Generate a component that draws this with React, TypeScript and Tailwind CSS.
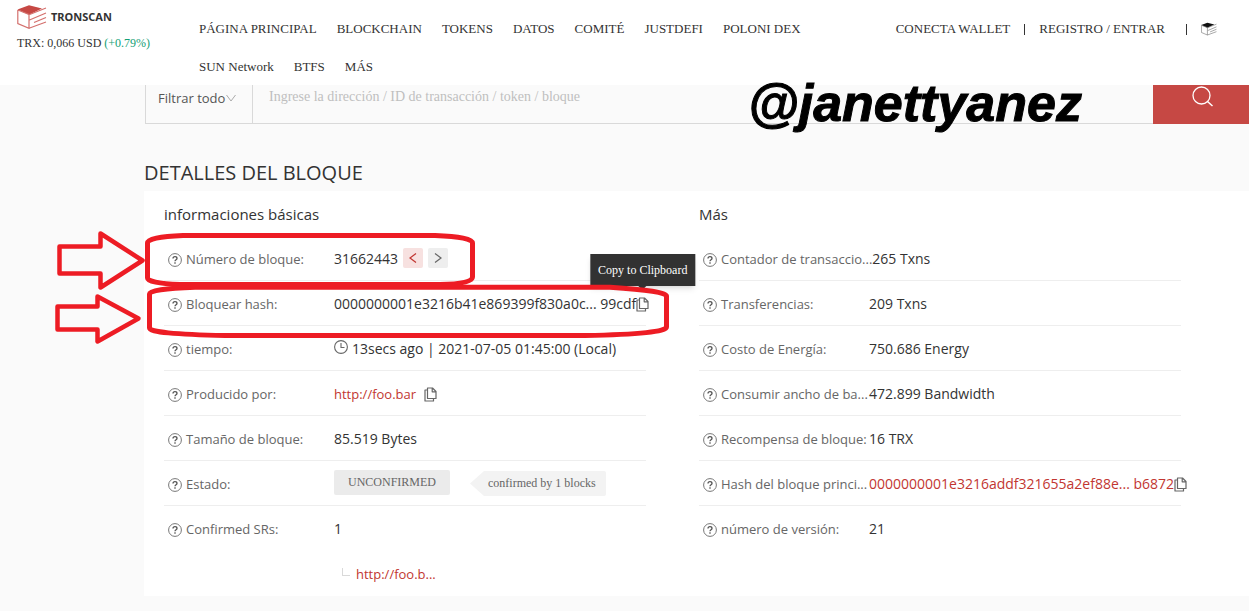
// src/pages/BlockDetails.tsx
// Block detail page: header, search bar, two columns of block fields and the
// hand-drawn callouts on top.

import type { ReactNode } from "react";

const NAV_ITEMS = [
  "PÁGINA PRINCIPAL",
  "BLOCKCHAIN",
  "TOKENS",
  "DATOS",
  "COMITÉ",
  "JUSTDEFI",
  "POLONI DEX",
  "SUN Network",
  "BTFS",
  "MÁS",
];

function CubeIcon({
  top,
  line,
  className,
}: {
  top: string;
  line: string;
  className: string;
}) {
  return (
    <svg viewBox="0 0 30 24" className={className} aria-hidden="true">
      <path d="M.5 4.500 12 .3 25 3.500 12 9.800Z" fill={top} />
      <path
        d="M.8 5v13.500L12 23.300V9.500L.8 5M12 23.300 29 17M12 9.800 29 3M12.500 15 29 8M17 17.500 29 12.500"
        fill="none"
        stroke={line}
        strokeWidth="1.200"
      />
    </svg>
  );
}

function HelpIcon() {
  return (
    <svg viewBox="0 0 14 14" className="mt-px size-3.5 shrink-0" aria-hidden="true">
      <circle cx="7" cy="7" r="6.400" fill="none" stroke="#777" />
      <path
        d="M5 5.600C5 4.300 5.900 3.700 7 3.700s2 .6 2 1.700C9 6.700 7 6.700 7 8.300"
        fill="none"
        stroke="#555"
        strokeWidth="1.300"
      />
      <rect x="6.300" y="9.300" width="1.400" height="1.400" fill="#555" />
    </svg>
  );
}

function CopyIcon() {
  return (
    <svg viewBox="0 0 13 15" className="h-[15px] w-[13px]" aria-hidden="true">
      <path
        d="M3.500 1h5l3.500 3.500V11.500H3.500ZM8.200 1v3.800H12M3.500 3H1v11h8.500v-2.500"
        fill="none"
        stroke="#666"
        strokeWidth="1.200"
        strokeLinejoin="round"
      />
    </svg>
  );
}

function ClockIcon() {
  return (
    <svg viewBox="0 0 14 14" className="mb-1 size-3.5 shrink-0" aria-hidden="true">
      <circle cx="7" cy="7" r="6.400" fill="none" stroke="#666" strokeWidth="1.100" />
      <path d="M7 3v4.500h3.500" fill="none" stroke="#666" strokeWidth="1.100" />
    </svg>
  );
}

function CopyButton({ tooltip }: { tooltip?: string }) {
  return (
    <span className="relative flex">
      <button type="button" aria-label="Copy to Clipboard">
        <CopyIcon />
      </button>
      {tooltip && (
        <span
          role="tooltip"
          className="absolute bottom-full left-1/2 mb-[11px] -translate-x-1/2 bg-[#323232] px-2 font-['Liberation_Serif',serif] text-xs leading-8 whitespace-nowrap text-white shadow-md"
        >
          {tooltip}
          <span className="absolute top-full left-1/2 -translate-x-1/2 border-x-4 border-t-4 border-x-transparent border-t-[#323232]" />
        </span>
      )}
    </span>
  );
}

function Field({
  label,
  children,
  last = false,
}: {
  label: string;
  children: ReactNode;
  last?: boolean;
}) {
  return (
    <div
      className={`flex h-[45px] items-center border-b pt-0.5 whitespace-nowrap ${
        last ? "border-transparent" : "border-[#eee]"
      }`}
    >
      <dt className="flex min-w-[170px] shrink-0 items-center gap-1 pl-1 text-[13px] text-[#666]">
        <HelpIcon />
        {label}
      </dt>
      <dd className="flex items-center gap-1">{children}</dd>
    </div>
  );
}

function Header() {
  return (
    <header className="flex bg-white pr-8 pl-[17px] font-['Liberation_Serif',serif] text-[13px] text-[#333]">
      <div className="w-[182px] shrink-0 pt-[5px]">
        <a href="#" className="flex h-6 items-center gap-1">
          <CubeIcon top="#c64844" line="#d4706d" className="h-6 w-[30px]" />
          <span className="font-['Noto_Sans',sans-serif] text-[11px] font-bold">
            TRONSCAN
          </span>
        </a>
        <p className="text-xs leading-7">
          TRX: 0,066 USD <span className="text-[#13a075]">(+0.79%)</span>
        </p>
      </div>
      <nav className="flex flex-1 flex-wrap gap-x-5 pt-[9px] pr-5 leading-10">
        {NAV_ITEMS.map((item) => (
          <a key={item} href="#" className="h-[38px]">
            {item}
          </a>
        ))}
      </nav>
      <div className="flex h-[38px] shrink-0 items-center pt-5">
        <a href="#">CONECTA WALLET</a>
        <span className="mx-3.5 h-[11px] w-px bg-[#333]" />
        <a href="#">REGISTRO / ENTRAR</a>
        <span className="mr-3.5 ml-[21px] h-[11px] w-px bg-[#333]" />
        <CubeIcon top="#111" line="#777" className="h-3.5 w-4" />
      </div>
    </header>
  );
}

function SearchBar() {
  return (
    <form className="ml-[145px] flex h-[39px] border-l border-[#d9d9d9] text-sm">
      <div className="flex w-[107px] items-start border-r border-b border-[#d9d9d9] pt-px pl-3">
        <select
          aria-label="Filtro"
          className="appearance-none bg-transparent text-[13px] leading-6 text-[#555]"
        >
          <option>Filtrar todo</option>
        </select>
        <svg viewBox="0 0 10 8" className="mt-2 h-2 w-2.5 shrink-0" aria-hidden="true">
          <path d="m.5 1 4.500 6 4.500-6" fill="none" stroke="#aaa" />
        </svg>
      </div>
      <div className="flex flex-1 items-start border-b border-[#d9d9d9] pl-4">
        <input
          type="text"
          aria-label="Buscar"
          placeholder="Ingrese la dirección / ID de transacción / token / bloque"
          className="w-full bg-transparent font-['Liberation_Serif',serif] leading-6 placeholder:text-[#bfbfbf]"
        />
      </div>
      <button
        type="button"
        aria-label="Buscar"
        className="flex w-24 justify-center bg-[#c64844] pt-px pl-1"
      >
        <svg viewBox="0 0 22 22" className="size-[22px]" aria-hidden="true">
          <circle cx="9.500" cy="9.500" r="8.500" fill="none" stroke="#fff" strokeWidth="1.300" />
          <path d="m15.500 15.500 5 4.500" stroke="#fff" strokeWidth="1.500" />
        </svg>
      </button>
    </form>
  );
}

// Red marker boxes, arrows and the author's handle, drawn over the page.
function Annotations() {
  return (
    <div className="pointer-events-none absolute inset-0">
      <span className="absolute top-[75px] left-[748px] font-['Liberation_Sans',sans-serif] text-[52px] leading-[56px] font-bold text-black italic [-webkit-text-stroke:1px_black]">
        @janettyanez
      </span>
      <svg
        viewBox="0 0 1249 611"
        className="absolute top-0 left-0 h-[611px] w-[1249px]"
        fill="none"
        stroke="#ed1c24"
        strokeWidth="5"
        strokeLinejoin="round"
        aria-hidden="true"
      >
        <path d="M59.500 246.500h41v-13l42 27-42 27v-14h-41Z" strokeWidth="4.500" />
        <path d="M57.500 306.500h40v-10l41 22-41 23v-12h-40Z" strokeWidth="4.500" />
        <path d="M183 235.500H435Q472.500 237 472.500 243V277Q472.500 284 440 284.500H180Q147.500 283 147.500 278V243Q147.500 237 183 235.500Z" />
        <path d="M195 287.300H610Q666.500 291 666.500 296V327Q666.500 334 585 335.500H225Q149.500 334 149.500 328V294Q149.500 289 195 287.300Z" />
      </svg>
    </div>
  );
}

export default function App() {
  return (
    <div className="relative min-h-screen overflow-hidden bg-[#fafafa] font-['Open_Sans',sans-serif] text-[#333]">
      <Header />
      <SearchBar />
      <main className="ml-36">
        <h1 className="mb-0.5 pt-[33px] text-xl leading-8">DETALLES DEL BLOQUE</h1>
        <div className="grid grid-cols-2 gap-[53px] bg-white pr-[68px] pl-5 text-sm">
          <section>
            <h2 className="pt-px text-[15px] leading-[44px]">informaciones básicas</h2>
            <dl>
              <Field label="Número de bloque:">
                31662443
                <button
                  type="button"
                  aria-label="Bloque anterior"
                  className="mb-0.5 ml-px flex size-5 items-center justify-center rounded-xs bg-[#f7e1e0]"
                >
                  <svg viewBox="0 0 8 10" className="h-2.5 w-2">
                    <path d="M7 .5 1 5l6 4.500" fill="none" stroke="#c23631" strokeWidth="1.200" />
                  </svg>
                </button>
                <button
                  type="button"
                  aria-label="Bloque siguiente"
                  className="mb-0.5 ml-px flex size-5 items-center justify-center rounded-xs bg-[#eee]"
                >
                  <svg viewBox="0 0 8 10" className="h-2.5 w-2">
                    <path d="m1 .5 6 4.500-6 4.500" fill="none" stroke="#666" strokeWidth="1.200" />
                  </svg>
                </button>
              </Field>
              <Field label="Bloquear hash:">
                <span className="-mr-1">0000000001e3216b41e869399f830a0c... 99cdf</span>
                <CopyButton tooltip="Copy to Clipboard" />
              </Field>
              <Field label="tiempo:">
                <ClockIcon />
                13secs ago | 2021-07-05 01:45:00 (Local)
              </Field>
              <Field label="Producido por:">
                <a href="#" className="mr-1 text-[13px] text-[#c23631]">
                  http://foo.bar
                </a>
                <CopyButton />
              </Field>
              <Field label="Tamaño de bloque:">85.519 Bytes</Field>
              <Field label="Estado:">
                <span className="mb-1 rounded-xs bg-[#ebebeb] px-3.5 font-['Liberation_Serif',serif] text-xs leading-[25px] text-[#666]">
                  UNCONFIRMED
                </span>
                <span className="mb-0.5 ml-4 flex items-center font-['Liberation_Serif',serif] text-xs leading-[25px] text-[#666]">
                  <svg viewBox="0 0 14 25" className="h-[25px] w-3.5" aria-hidden="true">
                    <path d="M14 0v25L0 12.500Z" fill="#f3f3f3" />
                  </svg>
                  <span className="rounded-r-xs bg-[#f3f3f3] pr-2.5 pl-1">
                    confirmed by 1 blocks
                  </span>
                </span>
              </Field>
              <Field label="Confirmed SRs:" last>
                1
              </Field>
              <div className="flex h-[45px] items-center gap-1.5 pt-px pl-[178px]">
                <span className="mb-1 h-2 w-2 border-b border-l border-[#d9d9d9]" />
                <a href="#" className="text-[13px] text-[#c23631]">
                  http://foo.b...
                </a>
              </div>
            </dl>
          </section>
          <section>
            <h2 className="pt-px text-[15px] leading-[44px]">Más</h2>
            <dl>
              <Field label="Contador de transaccio...">265 Txns</Field>
              <Field label="Transferencias:">209 Txns</Field>
              <Field label="Costo de Energía:">750.686 Energy</Field>
              <Field label="Consumir ancho de ba...">472.899 Bandwidth</Field>
              <Field label="Recompensa de bloque:">16 TRX</Field>
              <Field label="Hash del bloque princi...">
                <a href="#" className="-mr-1 text-[#c23631]">
                  0000000001e3216addf321655a2ef88e... b6872
                </a>
                <CopyButton />
              </Field>
              <Field label="número de versión:" last>
                21
              </Field>
            </dl>
          </section>
        </div>
      </main>
      <Annotations />
    </div>
  );
}
